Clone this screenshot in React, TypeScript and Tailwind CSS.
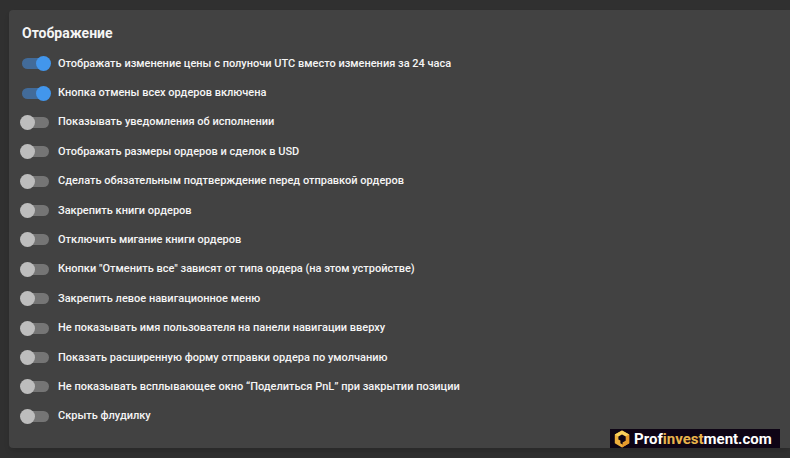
import React, { useState } from 'react';

interface DisplayOption {
  id: string;
  label: string;
  enabled: boolean;
}

const initialOptions: DisplayOption[] = [
  { id: 'utc-change', label: 'Отображать изменение цены с полуночи UTC вместо изменения за 24 часа', enabled: true },
  { id: 'cancel-all', label: 'Кнопка отмены всех ордеров включена', enabled: true },
  { id: 'fill-alerts', label: 'Показывать уведомления об исполнении', enabled: false },
  { id: 'usd-sizes', label: 'Отображать размеры ордеров и сделок в USD', enabled: false },
  { id: 'confirm-orders', label: 'Сделать обязательным подтверждение перед отправкой ордеров', enabled: false },
  { id: 'pin-books', label: 'Закрепить книги ордеров', enabled: false },
  { id: 'no-flashing', label: 'Отключить мигание книги ордеров', enabled: false },
  { id: 'cancel-by-type', label: 'Кнопки "Отменить все" зависят от типа ордера (на этом устройстве)', enabled: false },
  { id: 'pin-menu', label: 'Закрепить левое навигационное меню', enabled: false },
  { id: 'hide-username', label: 'Не показывать имя пользователя на панели навигации вверху', enabled: false },
  { id: 'advanced-form', label: 'Показать расширенную форму отправки ордера по умолчанию', enabled: false },
  { id: 'hide-pnl', label: 'Не показывать всплывающее окно “Поделиться PnL” при закрытии позиции', enabled: false },
  { id: 'hide-chat', label: 'Скрыть флудилку', enabled: false },
];

interface ToggleRowProps {
  option: DisplayOption;
  onToggle: (id: string) => void;
}

const ToggleRow: React.FC<ToggleRowProps> = ({ option, onToggle }) => (
  <li className="flex items-center gap-[9px]">
    <input
      id={option.id}
      type="checkbox"
      role="switch"
      checked={option.enabled}
      onChange={() => onToggle(option.id)}
      className="relative h-[11px] w-[27px] shrink-0 cursor-pointer appearance-none rounded-full bg-[#757575] before:absolute before:-top-0.5 before:-left-0.5 before:size-[15px] before:rounded-full before:bg-[#bdbdbd] checked:bg-[#426b99] checked:before:left-3.5 checked:before:bg-[#4296ec]"
    />
    <label htmlFor={option.id} className="cursor-pointer text-[11px] leading-4 font-medium text-[#f5f5f5]">
      {option.label}
    </label>
  </li>
);

const Watermark: React.FC = () => (
  <a href="#" className="absolute right-2.5 bottom-2.5 flex h-[19px] w-[170px] items-center gap-1 bg-[#0e0415] pl-1">
    <svg viewBox="0 0 16 18" className="h-[18px] w-4 shrink-0" aria-hidden="true">
      <path d="M8 0.5 L15.2 4.5 V13.2 L8 17.5 L0.8 13.2 V4.5 Z" fill="#efae3c" />
      <path d="M8 0.5 L15.2 4.5 L11.5 6.6 L8 4.6 L4.5 6.6 L0.8 4.5 Z" fill="#fbd15c" />
      <path d="M15.2 4.5 V13.2 L8 17.5 V13.6 L11.5 11.4 V6.6 Z" fill="#e79a2b" />
      <path d="M8 4.4 L11.7 6.5 V10.8 L8.6 12.6 V14.6 L6.4 13.2 V10.6 L4.4 9.6 V6.5 Z" fill="#0e0415" />
    </svg>
    <span className="text-[15px] leading-4 font-bold text-white [font-variant-ligatures:none]">
      Prof<span className="text-[#e9b44c]">invest</span>ment.com
    </span>
  </a>
);

const App: React.FC = () => {
  const [options, setOptions] = useState<DisplayOption[]>(initialOptions);

  const handleToggle = (id: string) => {
    setOptions(prev => prev.map(o => (o.id === id ? { ...o, enabled: !o.enabled } : o)));
  };

  return (
    <div className="relative flex min-h-screen flex-col bg-[#303030] pt-2.5 pb-2.5 pl-[9px] font-['Roboto',sans-serif]">
      <main className="flex grow flex-col rounded-l bg-[#424242] pt-[13px] pb-[17px] pl-[13px] shadow-md">
        <h1 className="text-[14px] leading-5 font-bold text-[#f5f5f5]">Отображение</h1>
        <ul className="mt-1.5 grid grow auto-rows-fr">
          {options.map(option => (
            <ToggleRow key={option.id} option={option} onToggle={handleToggle} />
          ))}
        </ul>
      </main>
      <Watermark />
    </div>
  );
};

export default App;
